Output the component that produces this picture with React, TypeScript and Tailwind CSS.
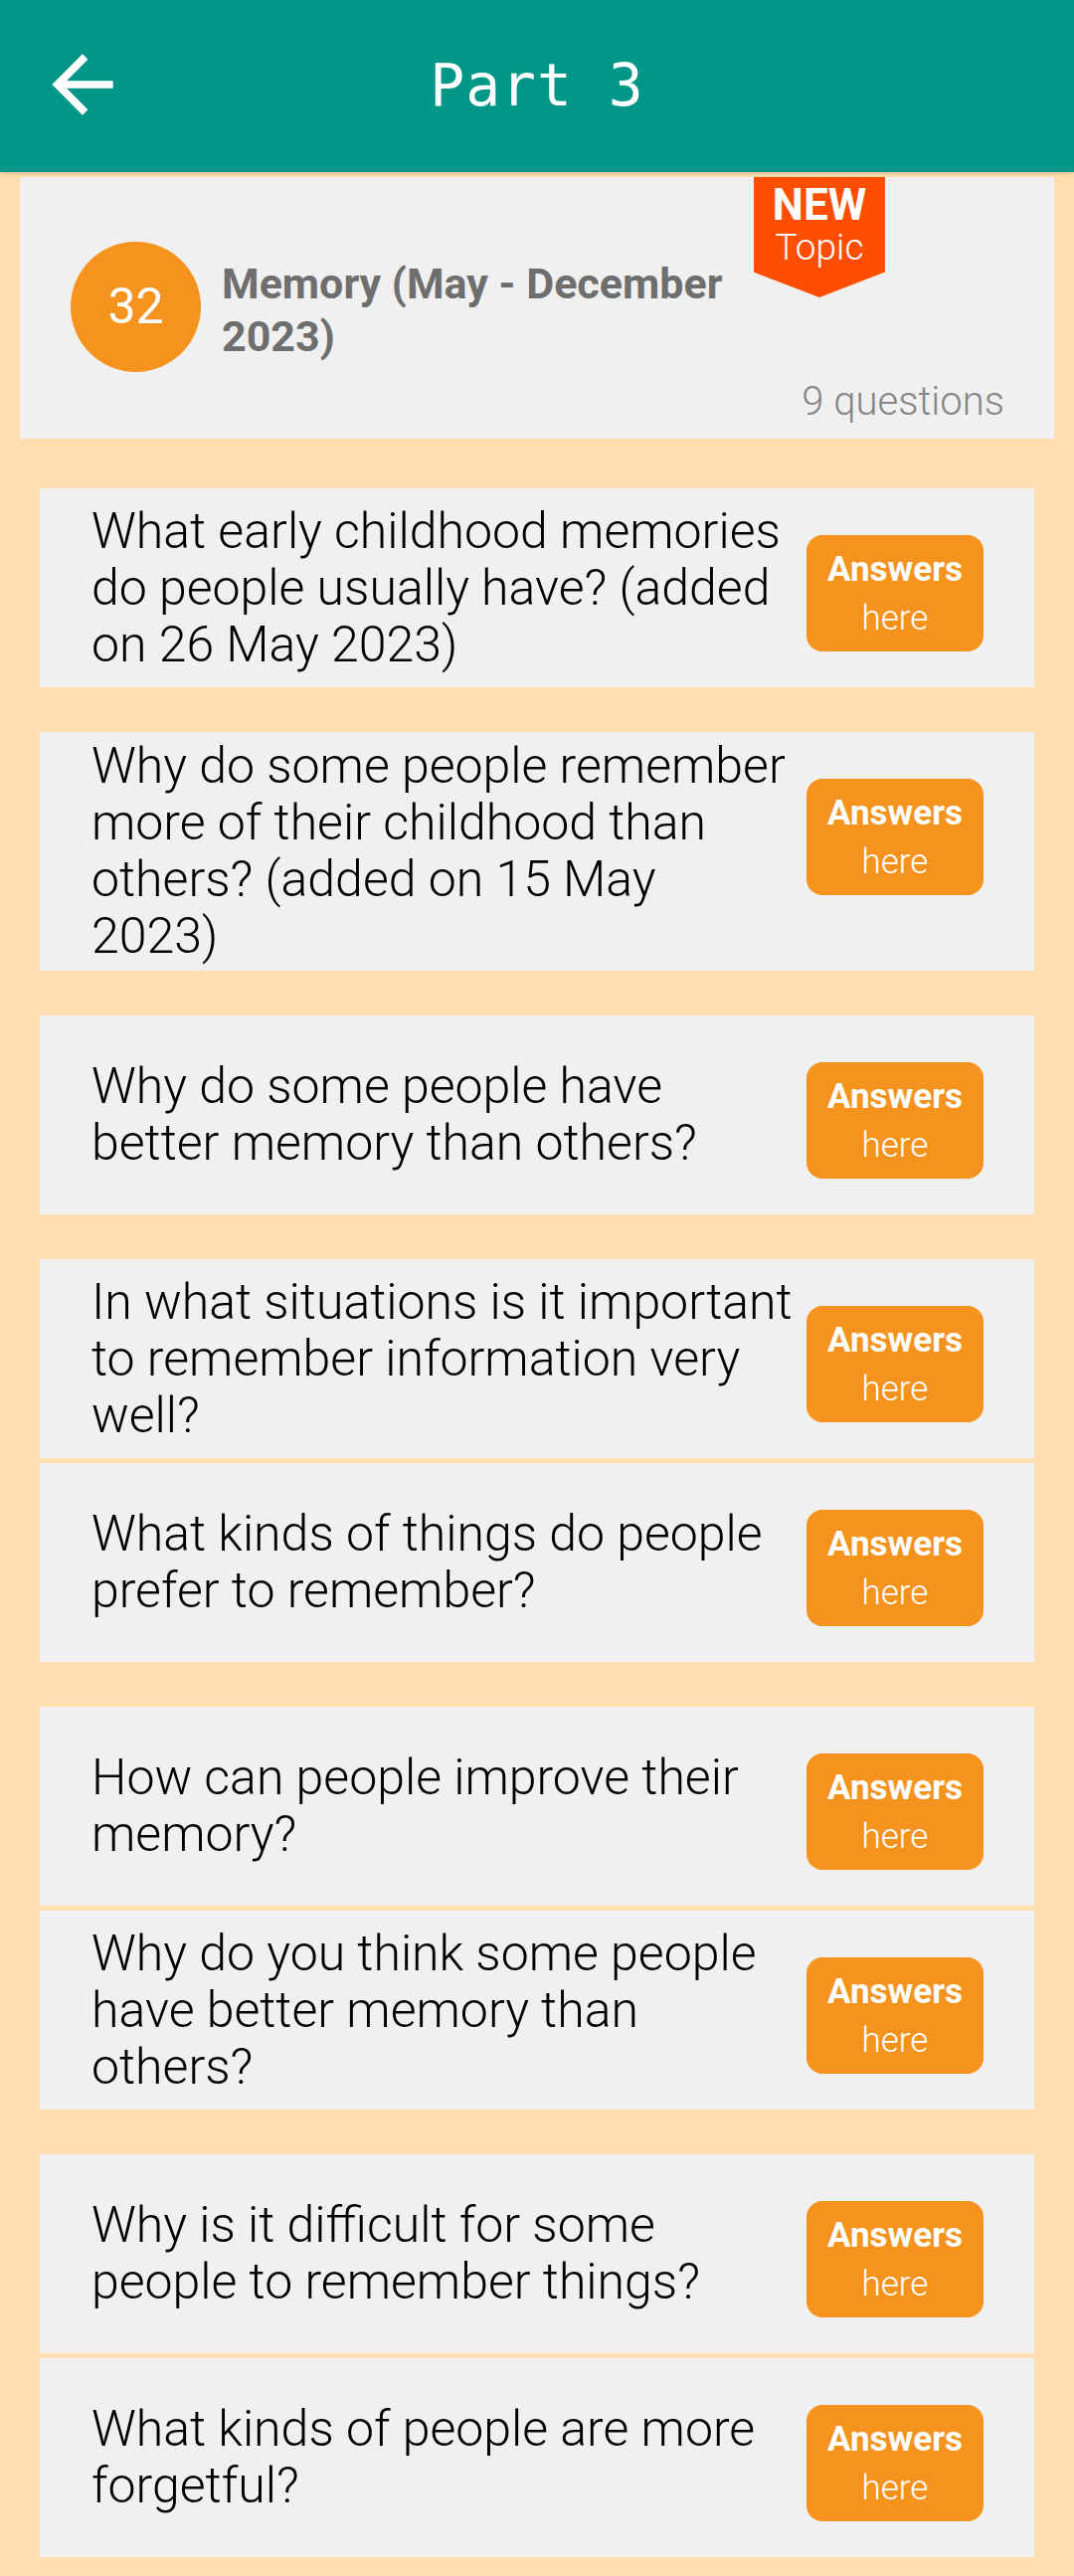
import React from "react";

const questions: string[][] = [
  ["What early childhood memories do people usually have? (added on 26 May 2023)"],
  ["Why do some people remember more of their childhood than others? (added on 15 May\n2023)"],
  ["Why do some people have better memory than others?"],
  [
    "In what situations is it important to remember information very well?",
    "What kinds of things do people prefer to remember?",
  ],
  [
    "How can people improve their memory?",
    "Why do you think some people have better memory than others?",
  ],
  [
    "Why is it difficult for some people to remember things?",
    "What kinds of people are more forgetful?",
  ],
];

function BackArrow() {
  return (
    <svg viewBox="0 0 24 24" className="w-[92px] h-[92px]" fill="#ffffff">
      <path d="M20 11H7.83l5.59-5.59L12 4l-8 8 8 8 1.41-1.41L7.83 13H20v-2z" />
    </svg>
  );
}

function QuestionCard({ text }: { text: string }) {
  return (
    <div className="flex items-start bg-[#f0f0f0] min-h-[200px] pl-[52px] pr-[51px] py-[6px]">
      <p className="self-center w-[708px] whitespace-pre-line text-[50px] leading-[57px] font-light text-black">
        {text}
      </p>
      <button className="ml-auto mt-[41px] w-[178px] h-[117px] shrink-0 rounded-[16px] bg-[#f6921e] text-white flex flex-col items-center justify-center">
        <span className="text-[35px] leading-[49px] font-bold">Answers</span>
        <span className="text-[35px] leading-[49px] font-light">here</span>
      </button>
    </div>
  );
}

export default function App() {
  return (
    <div className="min-h-[2590px] bg-[#ffdfb0] font-['Roboto','Noto_Sans',sans-serif]">
      {/* Header */}
      <header className="h-[173px] bg-[#009688] flex items-center relative shadow-[0_2px_4px_rgba(0,0,0,0.15)]">
        <div className="absolute left-[37px] top-[39px]">
          <BackArrow />
        </div>
        <h1 className="flex-1 text-center text-white text-[58px] font-['DejaVu_Sans_Mono',monospace] tracking-[1px]">
          Part 3
        </h1>
      </header>

      {/* Topic card */}
      <div className="mx-[20px] mt-[5px] bg-[#f0f0f0] relative pt-[65px] pb-[15px]">
        <div className="absolute left-[738px] top-0 w-[132px] h-[121px] bg-[#ff4e00] [clip-path:polygon(0_0,100%_0,100%_79%,50%_100%,0_79%)] flex flex-col items-center pt-[7px]">
          <span className="text-white font-bold text-[44px] leading-[42px]">NEW</span>
          <span className="text-white font-light text-[37px] leading-[44px]">Topic</span>
        </div>
        <div className="flex items-center pl-[51px]">
          <div className="w-[131px] h-[131px] rounded-full bg-[#f6921e] flex items-center justify-center text-white text-[50px]">
            32
          </div>
          <h2 className="ml-[21px] mt-[6px] w-[530px] text-[43px] leading-[53px] font-bold text-[#6e6e6e]">
            Memory (May - December 2023)
          </h2>
        </div>
        <p className="mt-[8px] pr-[50px] text-right text-[40px] leading-[44px] font-light text-[#858585]">
          9 questions
        </p>
      </div>

      {/* Questions */}
      <div className="px-[40px] pt-[50px] flex flex-col gap-[45px]">
        {questions.map((group, gi) => (
          <div key={gi} className="flex flex-col gap-[5px]">
            {group.map((q, qi) => (
              <QuestionCard key={qi} text={q} />
            ))}
          </div>
        ))}
      </div>
    </div>
  );
}
